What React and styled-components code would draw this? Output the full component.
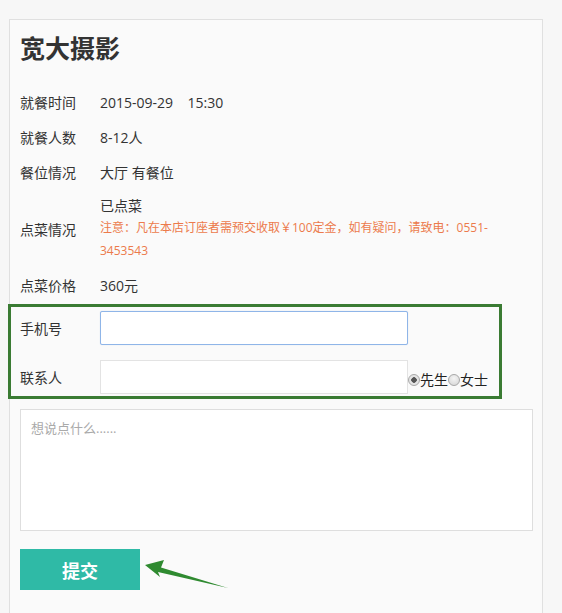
import React from 'react';
import styled, { createGlobalStyle } from 'styled-components';

const GlobalStyle = createGlobalStyle`
  html, body {
    margin: 0;
    padding: 0;
    background: #f7f7f7;
    font-family: "Open Sans", "Noto Sans CJK SC", sans-serif;
    color: #333;
  }
`;

const rows = [
  { label: '就餐时间', value: '2015-09-29\u00a0\u00a0\u00a0\u00a015:30' },
  { label: '就餐人数', value: '8-12人' },
  { label: '餐位情况', value: '大厅 有餐位' },
];

const App = () => {
  return (
    <>
      <GlobalStyle />
      <Card>
        <Title>宽大摄影</Title>
        {rows.map((r) => (
          <Row key={r.label}>
            <Label>{r.label}</Label>
            <Value>{r.value}</Value>
          </Row>
        ))}
        <Row>
          <Label>点菜情况</Label>
          <Value>
            <Ordered>已点菜</Ordered>
            <Notice>
              注意：凡在本店订座者需预交收取￥100定金，如有疑问，请致电：0551-3453543
            </Notice>
          </Value>
        </Row>
        <Row>
          <Label>点菜价格</Label>
          <Value>360元</Value>
        </Row>

        <Highlight>
          <FieldRow>
            <FieldLabel>手机号</FieldLabel>
            <TextInput type="text" $focused />
          </FieldRow>
          <FieldRow>
            <FieldLabel>联系人</FieldLabel>
            <TextInput type="text" />
            <RadioGroup>
              <Radio type="radio" name="sex" defaultChecked />
              <RadioText>先生</RadioText>
              <Radio type="radio" name="sex" />
              <RadioText>女士</RadioText>
            </RadioGroup>
          </FieldRow>
        </Highlight>

        <Message placeholder="想说点什么......" />

        <SubmitRow>
          <SubmitButton>提交</SubmitButton>
          <Arrow width="86" height="30" viewBox="0 0 86 30">
            <path
              d="M0 5 L19 0 L16 7.5 L83 28 L13 12 L15 17 Z"
              fill="#2f8a30"
            />
          </Arrow>
        </SubmitRow>
      </Card>
    </>
  );
};

export default App;

const Card = styled.div`
  box-sizing: border-box;
  width: 534px;
  min-height: 600px;
  margin: 19px 0 0 9px;
  padding: 10px 10px 20px;
  background: #fafafa;
  border: 1px solid #e0e0e0;
  border-bottom: none;
`;

const Title = styled.h1`
  margin: 0 0 19px;
  font-size: 25px;
  line-height: 36px;
  font-weight: bold;
  color: #333;
`;

const Row = styled.div`
  display: flex;
  align-items: center;
  padding: 6px 0;
  font-size: 14px;
`;

const Label = styled.div`
  width: 80px;
  flex-shrink: 0;
  line-height: 23px;
`;

const Value = styled.div`
  width: 415px;
  line-height: 23px;
`;

const Ordered = styled.div`
  line-height: 20px;
`;

const Notice = styled.div`
  font-size: 12px;
  line-height: 23px;
  color: #ec7a4c;
  word-break: break-word;
`;

const Highlight = styled.div`
  box-sizing: border-box;
  width: 494px;
  margin: 1px 0 0 -12px;
  padding: 4px 0 2px 9px;
  border: 3px solid #3a7b33;
`;

const FieldRow = styled.div`
  display: flex;
  align-items: center;
  & + & {
    margin-top: 15px;
  }
`;

const FieldLabel = styled.div`
  width: 80px;
  font-size: 14px;
`;

const TextInput = styled.input`
  box-sizing: border-box;
  width: 308px;
  height: 34px;
  margin: 0;
  padding: 0 8px;
  background: #fff;
  border: 1px solid ${(p) => (p.$focused ? '#8fb5e8' : '#e3e3e3')};
  border-radius: ${(p) => (p.$focused ? '2px' : '0')};
  box-shadow: ${(p) => (p.$focused ? '0 0 1px rgba(100, 150, 220, 0.4)' : 'none')};
  outline: none;
`;

const RadioGroup = styled.div`
  display: flex;
  align-items: center;
  margin-top: 6px;
  font-size: 14px;
`;

const Radio = styled.input`
  appearance: none;
  box-sizing: border-box;
  width: 12px;
  height: 12px;
  margin: 0;
  border: 1px solid #a8a8a8;
  border-radius: 50%;
  background: radial-gradient(circle at 50% 35%, #f4f4f4, #d4d4d4);
  &:checked {
    background: radial-gradient(circle, #555 0 2.5px, #e4e4e4 3px);
  }
`;

const RadioText = styled.span`
  line-height: 16px;
  color: #222;
`;

const Message = styled.textarea`
  box-sizing: border-box;
  display: block;
  width: 513px;
  height: 122px;
  margin-top: 10px;
  padding: 10px;
  background: #fff;
  border: 1px solid #dedede;
  resize: none;
  outline: none;
  font-family: inherit;
  font-size: 13px;
  line-height: 16px;
  &::placeholder {
    color: #aaa;
  }
`;

const SubmitRow = styled.div`
  display: flex;
  align-items: flex-start;
  margin-top: 18px;
`;

const SubmitButton = styled.button`
  width: 120px;
  height: 41px;
  padding: 0;
  border: none;
  background: #2fbaa6;
  color: #fff;
  font-family: inherit;
  font-size: 18px;
  font-weight: bold;
  cursor: pointer;
`;

const Arrow = styled.svg`
  margin: 11px 0 0 5px;
`;
